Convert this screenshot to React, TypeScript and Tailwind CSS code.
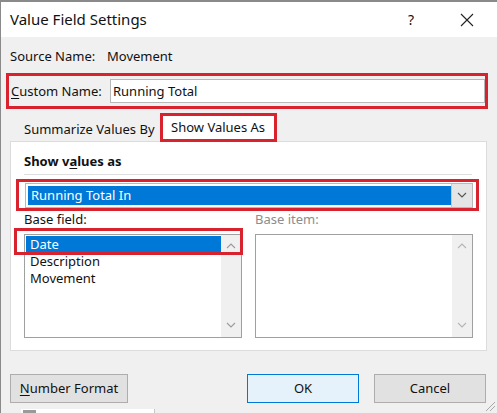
import React from "react";

const RED = "border-[#d8232f]";

function Chevron({ up = false, color = "#7a7a7a" }: { up?: boolean; color?: string }) {
  return (
    <svg width="10" height="6" viewBox="0 0 10 6" className="block">
      <path
        d={up ? "M1 5 L5 1 L9 5" : "M1 1 L5 5 L9 1"}
        fill="none"
        stroke={color}
        strokeWidth="1.1"
      />
    </svg>
  );
}

function ListBox({
  items,
  selected,
  arrowColor,
}: {
  items: string[];
  selected?: number;
  arrowColor: string;
}) {
  return (
    <div className="flex h-[104px] w-[218px] border border-[#a0a0a0] bg-white">
      <div className="flex-1 pl-[1px] pt-[1px]">
        {items.map((it, i) => (
          <div
            key={it}
            className={
              "h-[17px] pl-[4px] leading-[17px] " +
              (i === selected ? "bg-[#0078d7] text-white" : "text-[#111]")
            }
          >
            {it}
          </div>
        ))}
      </div>
      <div className="flex w-[20px] flex-col items-center justify-between bg-[#f0f0f0] pb-[9px] pt-[8px]">
        <Chevron up color={arrowColor} />
        <Chevron color={arrowColor} />
      </div>
    </div>
  );
}

function Button({
  children,
  primary = false,
  width,
}: {
  children: React.ReactNode;
  primary?: boolean;
  width: string;
}) {
  return (
    <div
      className={
        "flex h-[29px] items-center justify-center border text-[#111] " +
        width +
        (primary ? " border-[#0078d7] bg-[#e5f1fb]" : " border-[#adadad] bg-[#e1e1e1]")
      }
    >
      {children}
    </div>
  );
}

export default function App() {
  return (
    <div
      className="relative h-[413px] w-[497px] overflow-hidden border-l border-t-2 border-[#8a8a8a] bg-[#f0f0f0] text-[13px] leading-[17px] text-[#111]"
      style={{ fontFamily: '"Noto Sans", "Open Sans", sans-serif' }}
    >
      {/* title bar */}
      <div className="flex h-[35px] items-center bg-white pl-[9px]">
        <span className="flex-1 text-[15px] text-[#111]">Value Field Settings</span>
        <span className="mr-[46px] text-[14px]">?</span>
        <svg width="14" height="14" viewBox="0 0 14 14" className="mr-[23px]">
          <path d="M1 1 L13 13 M13 1 L1 13" stroke="#222" strokeWidth="1.1" />
        </svg>
      </div>

      <div className="px-[9px]">
        <div className="mt-[11px] flex h-[17px] items-center">
          <span className="w-[97px]">Source Name:</span>
          <span>Movement</span>
        </div>

        {/* custom name */}
        <div className={"-ml-[4px] mt-[8px] flex h-[36px] w-[482px] items-center border-[3px] pl-[2px] " + RED}>
          <span className="w-[99px]">
            <span className="underline underline-offset-2">C</span>ustom Name:
          </span>
          <div className="flex h-[24px] flex-1 items-center border border-[#b8b8b8] bg-white pl-[2px]">
            Running Total
          </div>
        </div>

        {/* tabs */}
        <div className="mt-[4px] flex h-[28px] items-end">
          <div className="flex h-[24px] items-center pl-[14px] pr-[5px]">Summarize Values By</div>
          <div className={"relative z-10 -mb-[1px] flex h-[29px] w-[117px] items-center justify-center border-[3px] bg-white " + RED}>
            Show Values As
          </div>
        </div>

        {/* panel */}
        <div className="h-[210px] w-[477px] border border-[#dcdcdc] bg-white px-[13px]">
          <div className="mt-[11px] h-[17px] font-bold">
            Show v<span className="underline underline-offset-2">a</span>lues as
          </div>
          <div className="mt-[4px] h-px w-[448px] bg-[#dedede]" />

          <div className={"-ml-[8px] mt-[4px] flex h-[32px] w-[463px] items-center border-[3px] pl-[6px] " + RED}>
            <div className="flex h-[25px] w-[448px] border border-[#b8b8b8] bg-white p-[2px] pr-0">
              <div className="flex flex-1 items-center bg-[#0078d7] pl-[3px] text-white">Running Total In</div>
              <div className="-my-[2px] flex w-[21px] items-center justify-center border-l border-[#c8c8c8] bg-[#e5e5e5]">
                <Chevron color="#555" />
              </div>
            </div>
          </div>

          <div className="flex">
            <div className="w-[232px]">
              <div className="h-[17px]">Base field:</div>
              <div className="relative mt-[6px]">
                <ListBox items={["Date", "Description", "Movement"]} selected={0} arrowColor="#9a9a9a" />
                <div className={"absolute -left-[10px] -top-[6px] h-[27px] w-[229px] border-[3px] " + RED} />
              </div>
            </div>
            <div>
              <div className="h-[17px] text-[#8d8d8d]">Base item:</div>
              <div className="mt-[6px]">
                <ListBox items={[]} arrowColor="#b5b5b5" />
              </div>
            </div>
          </div>
        </div>

        {/* buttons */}
        <div className="mr-[2px] mt-[23px] flex">
          <Button width="w-[118px]">
            <span>
              <span className="underline underline-offset-2">N</span>umber Format
            </span>
          </Button>
          <div className="flex-1" />
          <Button primary width="w-[112px]">
            OK
          </Button>
          <div className="w-[15px]" />
          <Button width="w-[112px]">Cancel</Button>
        </div>
      </div>

      {/* resize grip */}
      <svg width="12" height="12" viewBox="0 0 12 12" className="absolute bottom-[1px] right-[1px]">
        <path d="M11 2 L2 11 M11 6 L6 11" stroke="#a8a8a8" strokeWidth="1" />
      </svg>
      {/* window peeking below */}
      <div className="absolute bottom-0 left-[20px] h-[4px] w-[134px] border-r border-[#c8c8c8] bg-white" />
      <div className="absolute bottom-0 left-[22px] h-[3px] w-[13px] bg-[#9a9a9a]" />
    </div>
  );
}
